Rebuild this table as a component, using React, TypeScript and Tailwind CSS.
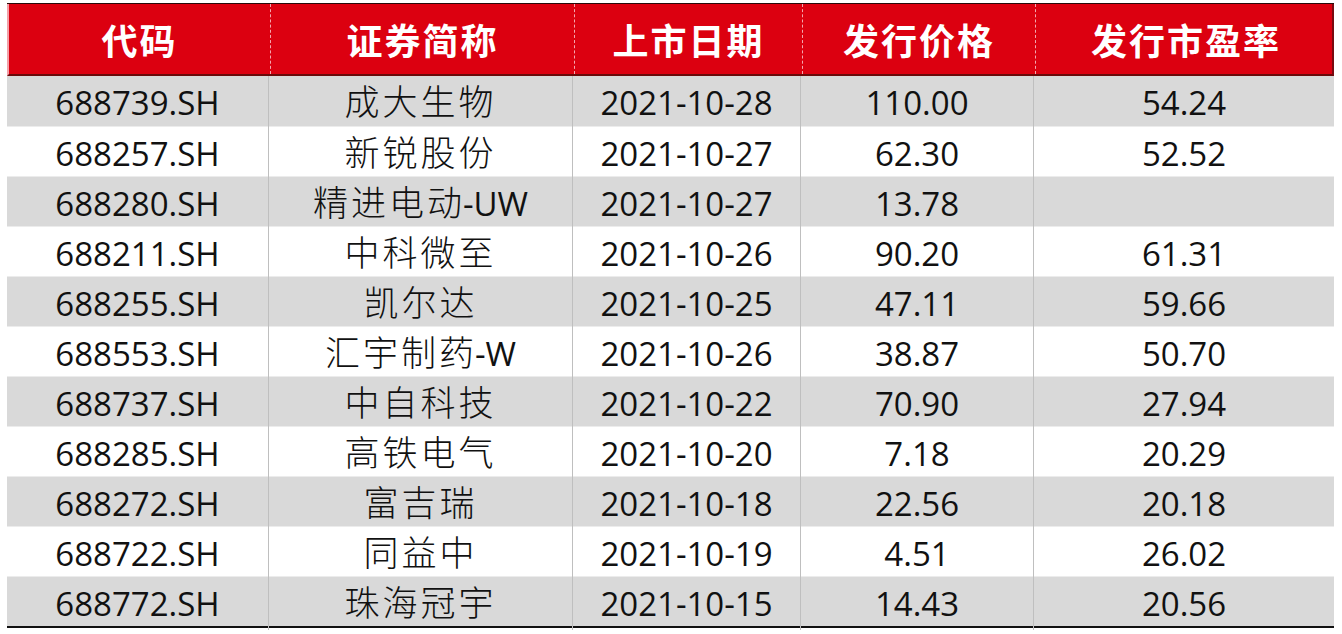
import React from "react";

const rows: [string, string, string, string, string, string][] = [
  ["688739.SH", "成大生物", "", "2021-10-28", "110.00", "54.24"],
  ["688257.SH", "新锐股份", "", "2021-10-27", "62.30", "52.52"],
  ["688280.SH", "精进电动", "-UW", "2021-10-27", "13.78", ""],
  ["688211.SH", "中科微至", "", "2021-10-26", "90.20", "61.31"],
  ["688255.SH", "凯尔达", "", "2021-10-25", "47.11", "59.66"],
  ["688553.SH", "汇宇制药", "-W", "2021-10-26", "38.87", "50.70"],
  ["688737.SH", "中自科技", "", "2021-10-22", "70.90", "27.94"],
  ["688285.SH", "高铁电气", "", "2021-10-20", "7.18", "20.29"],
  ["688272.SH", "富吉瑞", "", "2021-10-18", "22.56", "20.18"],
  ["688722.SH", "同益中", "", "2021-10-19", "4.51", "26.02"],
  ["688772.SH", "珠海冠宇", "", "2021-10-15", "14.43", "20.56"],
];

const headers = ["代码", "证券简称", "上市日期", "发行价格", "发行市盈率"];
const cols = "grid-cols-[261px_304px_228px_233px_301px]";

export default function App() {
  return (
    <div className="w-[1342px] h-[634px] bg-white pt-[3px] pl-[7px] overflow-hidden">
      <div className="w-[1327px] border-t border-[#2a0a0a] border-b-2 border-b-[#111]">
        <div
          className={`grid ${cols} h-[72px] bg-[#dc0010] border-b-2 border-b-[#6a0a0a] border-l-2 border-l-[#f3a0a8] border-r-2 border-r-[#7a0a10]`}
          style={{ fontFamily: '"Noto Sans CJK SC", sans-serif' }}
        >
          {headers.map((h, i) => (
            <div
              key={h}
              className={`flex items-center justify-center text-white font-bold text-[36px] tracking-[2px] ${
                i > 0 ? "border-l border-dashed border-l-[#f4a6ae]" : ""
              }`}
            >
              {h}
            </div>
          ))}
        </div>
        {rows.map((r, idx) => (
          <div
            key={r[0]}
            className={`grid ${cols} h-[50px] text-[#111] ${
              idx % 2 === 0 ? "bg-[#d9d9d9]" : "bg-white"
            } ${idx > 0 ? "border-t border-t-[#ececec]" : ""}`}
            style={{ fontFamily: '"Open Sans", "Noto Sans CJK SC", sans-serif' }}
          >
            <div className="flex items-center justify-center text-[33px]">{r[0]}</div>
            <div className="flex items-center justify-center text-[33px] border-l border-l-[#bfbfbf]">
              <span className="text-[35px] tracking-[3px] font-light">{r[1]}</span>
              {r[2] && <span className="-ml-[2px]">{r[2]}</span>}
            </div>
            {[r[3], r[4], r[5]].map((c, i) => (
              <div
                key={i}
                className="flex items-center justify-center text-[33px] border-l border-l-[#bfbfbf]"
              >
                {c}
              </div>
            ))}
          </div>
        ))}
      </div>
    </div>
  );
}
